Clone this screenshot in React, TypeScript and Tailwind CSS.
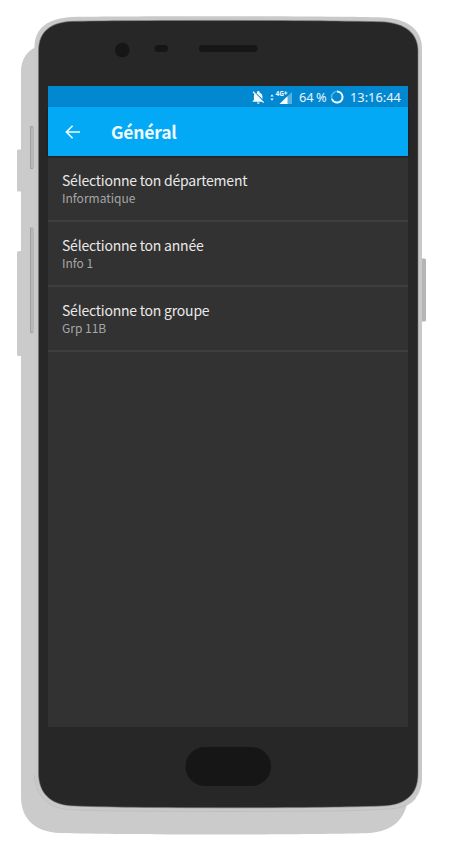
import React from "react";

function PhoneDrawing() {
  return (
    <svg className="absolute inset-0" width="450" height="862" viewBox="0 0 450 862" aria-hidden="true">
      <path
        d="M21 72C21 59 27 51 36 47L58 44H386C402 46 408 60 408 80V797C406 820 392 831 370 833C310 835 120 835 60 833C34 832 21 818 21 797V356H18.500Q17 356 17 354V253Q17 251 19 251H21V191.500H18.500Q17 191.500 17 190V151Q17 149.500 18.500 149.500H21Z"
        fill="#cbcbcb"
      />
      <path d="M422 258.500H424.500Q426 258.500 426 260V320Q426 321.500 424.500 321.500H422Z" fill="#b5b5b5" />
      <path
        d="M34.500 46C35 27 49 18.500 72 17C130 16 326 16 382 17.500C407 18.500 421.500 29 422 48V778C422 794 413 805 398 808C378 811 310 811.500 228 811.500C146 811.500 85 811 64 809C46 806 34.500 794 34.500 775Z"
        fill="#c9c9c9"
      />
      <path
        d="M34.500 775C35 793 46 806 64 809C85 811 146 811.500 228 811.500C310 811.500 378 811 398 808C407 806 413 802 416 798"
        fill="none"
        stroke="#b8b8b8"
        strokeWidth=".6"
      />
      <path
        d="M38.500 50C39 31 51 22.500 72 21.300C130 20 326 20 382 21.800C406 23 417.500 34 418 50V774C418 794 406 804 386 805.800C330 808.500 125 808.500 70 805.800C50 804 39 793 38.500 774Z"
        fill="#272727"
        stroke="#777"
        strokeWidth=".6"
      />
      <path d="M33 126.500H30.500V168.500H33M33 228H30.500V332.500H33" fill="none" stroke="#949494" strokeWidth=".8" />
      <path d="M31 127H34V168H31ZM31 228.500H34V332H31Z" fill="#b7b7b7" />
      <circle cx="122.300" cy="50" r="7.300" fill="#161616" />
      <rect x="154.500" y="45" width="13.500" height="7" rx="3.500" fill="#161616" />
      <rect x="199" y="45" width="58.500" height="7" rx="3.500" fill="#161616" />
      <rect x="185.500" y="747" width="85.500" height="39" rx="19.500" fill="#161616" />
    </svg>
  );
}

function StatusBar() {
  return (
    <div className="flex h-[21px] items-center bg-[#0288d1] pl-[204px] pt-px font-['Noto_Sans',sans-serif] text-[12.5px] leading-[20px] text-[#e8f4fb]">
      <svg className="shrink-0" width="13" height="13" viewBox="2 2 20.5 20.5" fill="#f4faff">
        <path d="M20 18.700L7.800 6.100 4.300 2.500 3 3.800l2.800 2.800C5 7.900 5 9.400 5 11v5l-2 2v1h14.700l2 2 1.300-1.300-1-1zM12 22c1.100 0 2-.9 2-2h-4c0 1.100.9 2 2 2zm6.500-7.300V11c0-3.100-1.700-5.600-4.500-6.300V4a2 2 0 0 0-4 0v.7l-1.300.5z" />
      </svg>
      <svg className="ml-[5px] shrink-0 overflow-visible" width="23" height="19" viewBox="0 -2 23 19">
        <path d="M.3 6.400L2 4.300 3.700 6.400ZM.3 8.600L2 10.700 3.700 8.600Z" fill="#e8f4fb" />
        <path d="M22 2V14H9.500Z" fill="#56b1e1" />
        <path d="M17.500 6.300V14H9.500Z" fill="#fff" />
        <text x="5.500" y="6.300" fill="#f4faff" fontSize="7.2" fontWeight="700" fontFamily="Noto Sans, sans-serif" textLength="8.500" lengthAdjust="spacingAndGlyphs">4G</text>
        <path d="M14.200 3H17.400M15.800 1.400V4.600" stroke="#f4faff" strokeWidth="1" />
      </svg>
      <span className="ml-[6px] w-[30px] shrink-0 whitespace-nowrap text-[12.8px] [word-spacing:-1px]">64 %</span>
      <svg className="ml-[1px] shrink-0" width="14" height="14" viewBox="0 0 14 14">
        <circle cx="7" cy="7" r="5.500" fill="none" stroke="#55b3e3" strokeWidth="1.600" />
        <path d="M7 1.500A5.500 5.500 0 1 1 1.900 9" fill="none" stroke="#f4faff" strokeWidth="1.900" />
      </svg>
      <span className="ml-[6px] whitespace-nowrap text-[12.8px]">13:16:44</span>
    </div>
  );
}

const settings = [
  { title: "Sélectionne ton département", value: "Informatique" },
  { title: "Sélectionne ton année", value: "Info 1" },
  { title: "Sélectionne ton groupe", value: "Grp 11B" },
];

export default function App() {
  return (
    <main className="relative h-[862px] w-[450px] overflow-hidden bg-white pl-12 pt-[86px] font-['Noto_Sans_CJK_SC',sans-serif]">
      <PhoneDrawing />
      <section className="relative h-[640.5px] w-[360px] bg-[#323232]">
        <StatusBar />
        <header className="mb-px flex h-[49px] items-center bg-[#03a9f4] pl-[17px] shadow-[0_1px_2px_rgba(0,0,0,0.45)]">
          <svg width="16" height="14" viewBox="0 0 16 14" fill="none" stroke="#eefaff" strokeWidth="1.600">
            <path d="M15 7H1.800M7.600 .8L1.400 7L7.600 13.200" />
          </svg>
          <h1 className="ml-[30px] text-[17.5px] font-bold leading-[49px] tracking-[-0.2px] text-[#eefaff]">Général</h1>
        </header>
        {settings.map(({ title, value }) => (
          <div key={title} className="h-[65px] border-b-2 border-[#3e3e3e] pl-[14px] pt-[14px]">
            <div className="whitespace-nowrap text-[14px] leading-[18px] tracking-[-0.22px] text-[#e9e9e9]">{title}</div>
            <div className="text-[12px] leading-[17px] text-[#a6a6a6]">{value}</div>
          </div>
        ))}
      </section>
    </main>
  );
}
